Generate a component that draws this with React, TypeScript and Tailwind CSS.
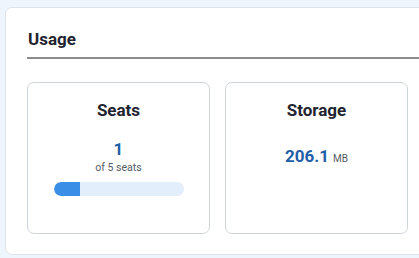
import React from "react";

export default function App() {
  return (
    <div className="w-[419px] h-[258px] overflow-hidden bg-[#eef5fd] pt-[7px] pl-[5px]" style={{ fontFamily: "Roboto, 'Liberation Sans', sans-serif" }}>
      <div className="w-[440px] h-[248px] bg-white rounded-[7px] border border-[#dde3ea] pl-[21px] pt-[19px]">
        <div className="border-b-2 border-[#8c8c8c] pb-[6px]">
          <h2 className="text-[17px] leading-[24px] font-bold text-[#1f2430] pl-[1px]">Usage</h2>
        </div>
        <div className="flex gap-[15px] mt-[23px]">
          <div className="w-[183px] h-[152px] rounded-[7px] border border-[#cfd4da] flex flex-col items-center pt-[15px]">
            <div className="text-[17px] leading-[24px] font-bold text-[#1f2430]">Seats</div>
            <div className="mt-[15px] text-[17px] leading-[24px] font-bold text-[#1f5fa8]">1</div>
            <div className="text-[10.5px] leading-[14px] text-[#555b63]">of 5 seats</div>
            <div className="mt-[7px] w-[130px] h-[14px] rounded-full bg-[#e2eefc] overflow-hidden">
              <div className="h-full bg-[#3a8ee6] rounded-l-full" style={{ width: "20%" }} />
            </div>
          </div>
          <div className="w-[183px] h-[152px] rounded-[7px] border border-[#cfd4da] flex flex-col items-center pt-[15px]">
            <div className="text-[17px] leading-[24px] font-bold text-[#1f2430]">Storage</div>
            <div className="mt-[22px] flex items-baseline gap-[4px]">
              <span className="text-[17px] leading-[24px] font-bold text-[#1f5fa8]">206.1</span>
              <span className="text-[10px] text-[#555b63]">MB</span>
            </div>
          </div>
        </div>
      </div>
    </div>
  );
}
